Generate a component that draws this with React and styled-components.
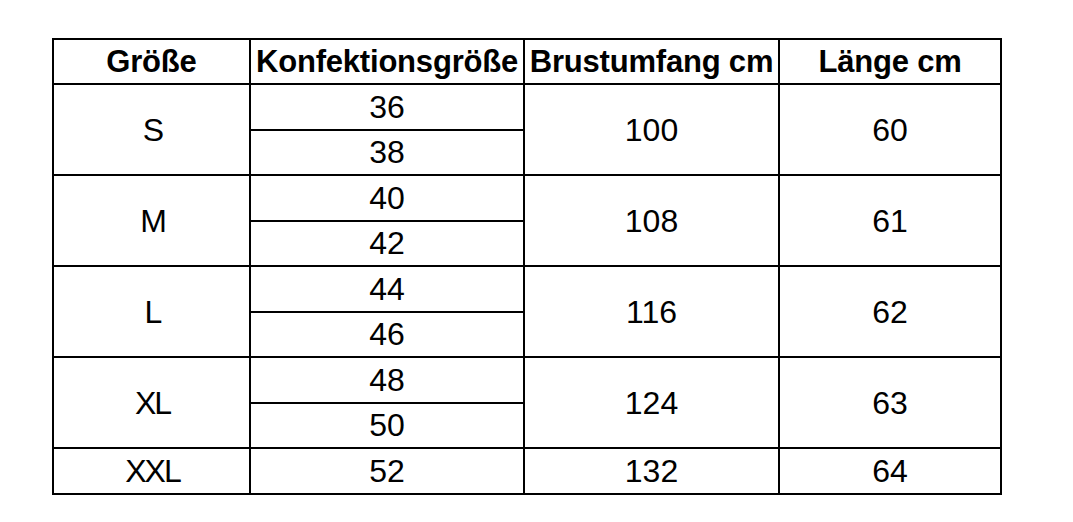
import React from "react";
import styled, { createGlobalStyle } from "styled-components";

const GlobalStyle = createGlobalStyle`
  html, body {
    margin: 0;
    padding: 0;
    background: #fff;
  }
  body {
    font-family: "Liberation Sans", Arial, sans-serif;
    color: #000;
  }
`;

const Page = styled.div`
  padding: 38px 0 0 52px;
`;

const Table = styled.table`
  border-collapse: collapse;
  table-layout: fixed;
  width: 948px;
`;

const Col = styled.col`
  width: ${(props) => props.w}px;
`;

const Row = styled.tr`
  height: ${(props) => props.h || 45.5}px;
`;

const HeadCell = styled.th`
  border: 2px solid #000;
  padding: 0;
  font-size: 31px;
  font-weight: 700;
  line-height: 1;
  text-align: center;
  vertical-align: middle;
  white-space: nowrap;
  letter-spacing: -0.2px;
`;

const Cell = styled.td`
  border: 2px solid #000;
  padding: 0;
  font-size: 32px;
  font-weight: 400;
  line-height: 1;
  text-align: center;
  vertical-align: middle;
  white-space: nowrap;
  letter-spacing: ${(props) => (props.narrow ? "-2px" : "0")};
  text-indent: ${(props) => (props.narrow ? "2px" : "0")};
`;

const sizes = [
  { label: "S", konf: ["36", "38"], brust: "100", laenge: "60" },
  { label: "M", konf: ["40", "42"], brust: "108", laenge: "61" },
  { label: "L", konf: ["44", "46"], brust: "116", laenge: "62" },
  { label: "XL", konf: ["48", "50"], brust: "124", laenge: "63" },
  { label: "XXL", konf: ["52"], brust: "132", laenge: "64" },
];

export default function App() {
  return (
    <>
      <GlobalStyle />
      <Page>
        <Table>
          <colgroup>
            <Col w={197} />
            <Col w={274} />
            <Col w={255} />
            <Col w={222} />
          </colgroup>
          <thead>
            <Row h={45}>
              <HeadCell>Größe</HeadCell>
              <HeadCell>Konfektionsgröße</HeadCell>
              <HeadCell>Brustumfang cm</HeadCell>
              <HeadCell>Länge cm</HeadCell>
            </Row>
          </thead>
          <tbody>
            {sizes.map((size) =>
              size.konf.map((konf, i) => (
                <Row key={size.label + konf} h={size.konf.length === 1 ? 46 : 45.5}>
                  {i === 0 && (
                    <Cell narrow rowSpan={size.konf.length}>
                      {size.label}
                    </Cell>
                  )}
                  <Cell>{konf}</Cell>
                  {i === 0 && <Cell rowSpan={size.konf.length}>{size.brust}</Cell>}
                  {i === 0 && <Cell rowSpan={size.konf.length}>{size.laenge}</Cell>}
                </Row>
              ))
            )}
          </tbody>
        </Table>
      </Page>
    </>
  );
}
